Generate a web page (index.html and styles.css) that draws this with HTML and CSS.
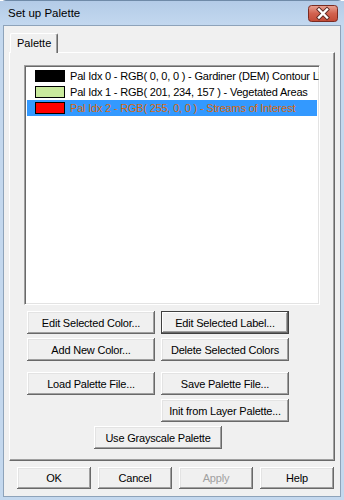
FILE: index.html
```html
<!DOCTYPE html>
<html lang="en">
<head>
  <meta charset="UTF-8">
  <title>Set up Palette</title>
  <link rel="stylesheet" href="styles.css">
</head>
<body>
  <div class="window">
    <div class="titlebar">
      <span class="title">Set up Palette</span>
      <span class="close">
        <svg width="30" height="17" viewBox="0 0 30 17">
          <defs>
            <linearGradient id="red" x1="0" y1="0" x2="0" y2="1">
              <stop offset="0" stop-color="#e8a394"/>
              <stop offset="0.5" stop-color="#d2624f"/>
              <stop offset="1" stop-color="#c24a36"/>
            </linearGradient>
          </defs>
          <rect x="0.5" y="0.5" width="29" height="16" rx="3" fill="url(#red)" stroke="#7a2b22"/>
          <path d="M11 4.5 L19 12.5 M19 4.5 L11 12.5" stroke="#5b2a24" stroke-width="4.2" stroke-linecap="square"/>
          <path d="M11 4.5 L19 12.5 M19 4.5 L11 12.5" stroke="#ffffff" stroke-width="2.4" stroke-linecap="square"/>
        </svg>
      </span>
    </div>

    <div class="client">
      <div class="tabs">
        <div class="tab">Palette</div>
      </div>

      <div class="panel">
        <ul class="list">
          <li class="item">
            <span class="swatch" style="background: rgb(0, 0, 0)"></span>
            <span class="label">Pal Idx 0 - RGB( 0, 0, 0 ) - Gardiner (DEM) Contour Lines</span>
          </li>
          <li class="item">
            <span class="swatch" style="background: rgb(201, 234, 157)"></span>
            <span class="label">Pal Idx 1 - RGB( 201, 234, 157 ) - Vegetated Areas</span>
          </li>
          <li class="item selected">
            <span class="swatch" style="background: rgb(255, 0, 0)"></span>
            <span class="label">Pal Idx 2 - RGB( 255, 0, 0 ) - Streams of Interest</span>
          </li>
        </ul>

        <div class="row first">
          <button class="btn">Edit Selected Color...</button>
          <button class="btn default">Edit Selected Label...</button>
        </div>
        <div class="row">
          <button class="btn">Add New Color...</button>
          <button class="btn">Delete Selected Colors</button>
        </div>
        <div class="row sep">
          <button class="btn">Load Palette File...</button>
          <button class="btn">Save Palette File...</button>
        </div>
        <div class="row right">
          <button class="btn">Init from Layer Palette...</button>
        </div>
        <div class="row center">
          <button class="btn">Use Grayscale Palette</button>
        </div>
      </div>

      <div class="footer">
        <button class="btn small">OK</button>
        <button class="btn small">Cancel</button>
        <button class="btn small disabled">Apply</button>
        <button class="btn small">Help</button>
      </div>
    </div>
  </div>
</body>
</html>
```

FILE: styles.css
```css
body {
  margin: 0;
  background: #ffffff;
  font-family: "Liberation Sans", Arial, sans-serif;
}
.window {
  width: 344px;
  height: 500px;
  box-sizing: border-box;
  background: #c4d8ee;
  border-top: 1px solid #6f8aa8;
  border-radius: 6px 6px 0 0;
  padding: 0 3px 3px 3px;
  display: flex;
  flex-direction: column;
}
.titlebar {
  height: 24px;
  display: flex;
  align-items: center;
  justify-content: space-between;
  background: linear-gradient(#b3cbe7, #c3d8ef);
  margin: 0 -3px;
  padding: 0 6px 0 8px;
}
.title {
  font-size: 11.5px;
  color: #000;
}
.close {
  display: flex;
  height: 17px;
}
.client {
  flex: 1;
  background: #f0f0f0;
  border: 1px solid #8ea3ba;
  display: flex;
  flex-direction: column;
}
.tabs {
  display: flex;
  margin: 7px 0 -1px 6px;
  position: relative;
  z-index: 1;
}
.tab {
  height: 20px;
  width: 48px;
  box-sizing: border-box;
  background: #f0f0f0;
  border-top: 1px solid #fff;
  border-left: 1px solid #fff;
  border-right: 1px solid #696969;
  box-shadow: inset -1px 0 #a0a0a0;
  border-radius: 2px 2px 0 0;
  font-size: 11px;
  padding: 3px 0 0 6px;
}
.panel {
  width: 326px;
  height: 409px;
  box-sizing: border-box;
  margin-left: 5px;
  border-top: 1px solid #fff;
  border-left: 1px solid #fff;
  border-right: 1px solid #696969;
  border-bottom: 1px solid #696969;
  box-shadow: inset -1px -1px #a0a0a0;
  padding: 12px 0 0 14px;
}
.list {
  list-style: none;
  margin: 0;
  padding: 2px 2px 0 2px;
  width: 296px;
  height: 240px;
  box-sizing: border-box;
  background: #fff;
  border-top: 1px solid #a0a0a0;
  border-left: 1px solid #a0a0a0;
  border-right: 1px solid #fff;
  border-bottom: 1px solid #fff;
  box-shadow: inset 1px 1px #696969, inset -1px -1px #e3e3e3;
  overflow: hidden;
}
.item {
  height: 16px;
  display: flex;
  align-items: center;
  padding-left: 8px;
  white-space: nowrap;
  font-size: 11px;
  letter-spacing: -0.2px;
  color: #000;
}
.item.selected {
  background: #3399ff;
  color: #d8690c;
}
.swatch {
  width: 30px;
  height: 12px;
  box-sizing: border-box;
  border: 1px solid #000;
  margin-right: 5px;
  flex: none;
}
.row {
  display: flex;
  gap: 6px;
  margin: 4px 0 0 3px;
  width: 262px;
}
.row.first {
  margin-top: 6px;
}
.row.sep {
  margin-top: 11px;
}
.row.right {
  justify-content: flex-end;
}
.row.center {
  justify-content: center;
}
.btn {
  width: 128px;
  height: 23px;
  padding: 0;
  border: none;
  background: #f0f0f0;
  font-family: "Liberation Sans", Arial, sans-serif;
  font-size: 11px;
  letter-spacing: -0.2px;
  color: #000;
  box-shadow: inset -1px -1px #696969, inset 1px 1px #fff, inset -2px -2px #a0a0a0, inset 2px 2px #e3e3e3;
}
.btn.default {
  box-shadow: inset 0 0 0 1px #404040, inset -2px -2px #696969, inset 2px 2px #fff, inset -3px -3px #a0a0a0;
}
.footer {
  display: flex;
  gap: 7px;
  margin: 6px 0 0 13px;
}
.btn.small {
  width: 74px;
  height: 22px;
}
.btn.disabled {
  color: #a0a0a0;
}
```
